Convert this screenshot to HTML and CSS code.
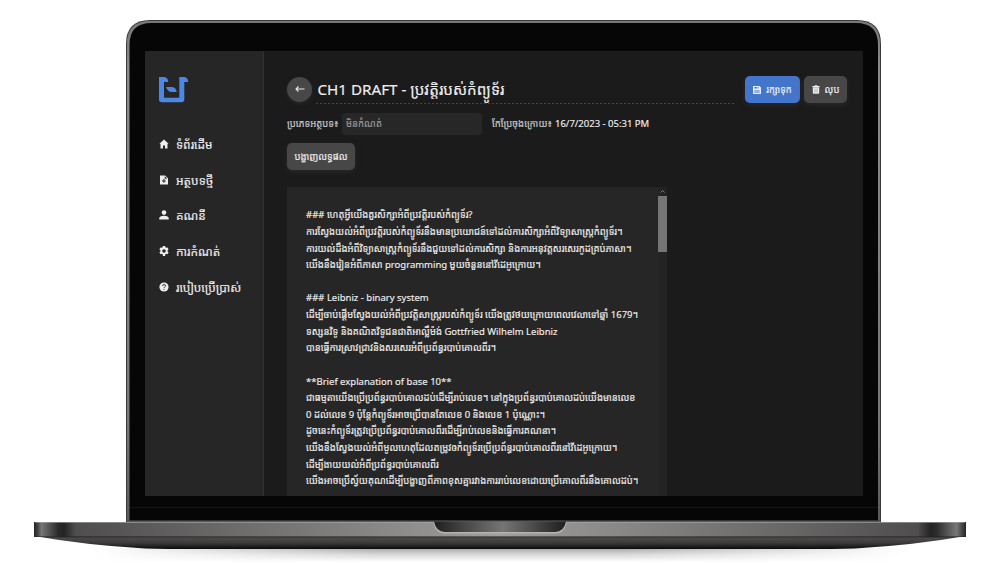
FILE: index.html
```html
<!DOCTYPE html>
<html lang="km">
<head>
<meta charset="utf-8">
<title>CH1 DRAFT</title>
<link rel="stylesheet" href="styles.css">
</head>
<body>
<div class="stage">
<svg class="laptop" width="1000" height="563" viewBox="0 0 1000 563" aria-hidden="true">
  <defs>
    <linearGradient id="deck" x1="34" x2="966" y1="0" y2="0" gradientUnits="userSpaceOnUse">
      <stop offset="0" stop-color="#222"/><stop offset=".004" stop-color="#444"/><stop offset=".008" stop-color="#777"/>
      <stop offset=".026" stop-color="#2b2b2b"/><stop offset=".032" stop-color="#242424"/><stop offset=".045" stop-color="#504e4f"/>
      <stop offset=".09" stop-color="#565454"/><stop offset=".5" stop-color="#a09f9d"/><stop offset=".91" stop-color="#565454"/>
      <stop offset=".948" stop-color="#504e4f"/><stop offset=".962" stop-color="#242424"/><stop offset=".968" stop-color="#2b2b2b"/>
      <stop offset=".99" stop-color="#777"/><stop offset="1" stop-color="#222"/>
    </linearGradient>
    <linearGradient id="under" x1="0" x2="0" y1="536" y2="549" gradientUnits="userSpaceOnUse">
      <stop offset="0" stop-color="#2c2a29"/><stop offset=".2" stop-color="#4b4948"/><stop offset=".55" stop-color="#3b3938"/><stop offset="1" stop-color="#0a0a0a"/>
    </linearGradient>
    <linearGradient id="notch" x1="434" x2="566" y1="0" y2="0" gradientUnits="userSpaceOnUse">
      <stop offset="0" stop-color="#1e1e1e"/><stop offset=".15" stop-color="#3a3939"/><stop offset=".52" stop-color="#777574"/><stop offset=".85" stop-color="#3a3939"/><stop offset="1" stop-color="#1e1e1e"/>
    </linearGradient>
    <linearGradient id="rim" x1="0" x2="0" y1="20" y2="522" gradientUnits="userSpaceOnUse">
      <stop offset="0" stop-color="#777"/><stop offset=".1" stop-color="#8b8b8b"/><stop offset=".8" stop-color="#777"/><stop offset="1" stop-color="#5a5a5a"/>
    </linearGradient>
    <linearGradient id="shadow" x1="0" x2="0" y1="548" y2="562" gradientUnits="userSpaceOnUse">
      <stop offset="0" stop-color="#a4a4a4"/><stop offset=".45" stop-color="#d6d6d6"/><stop offset="1" stop-color="#fff"/>
    </linearGradient>
    <linearGradient id="fade" x1="0" x2="1" y1="0" y2="0">
      <stop offset="0" stop-color="#000"/><stop offset=".35" stop-color="#fff"/><stop offset=".65" stop-color="#fff"/><stop offset="1" stop-color="#000"/>
    </linearGradient>
    <mask id="sides"><rect x="95" y="548" width="810" height="15" fill="url(#fade)"/></mask>
  </defs>
  <rect x="95" y="548" width="810" height="14" fill="url(#shadow)" mask="url(#sides)"/>
  <path d="M126 522V44q0-24 24-24H857q24 0 24 24V522Z" fill="#3b3b3b"/>
  <path d="M127 522V44q0-23 23-23H857q23 0 23 23V522Z" fill="url(#rim)"/>
  <path d="M129.500 521V45q0-22 22-22H856q22 0 22 22V521Z" fill="#060606"/>
  <path d="M130 507.500H878" stroke="#141414"/>
  <path d="M129 520.500H879" stroke="#343434"/>
  <path d="M34 536H966Q915 545 855 548.500Q835 549 800 549H200Q165 549 145 548.500Q85 545 34 536Z" fill="url(#under)"/>
  <rect x="34" y="522" width="932" height="15" fill="url(#deck)"/>
  <path d="M35 522.500H965" stroke="#aaa" stroke-opacity=".6"/>
  <path d="M36 536.500H964" stroke="#222" stroke-opacity=".55"/>
  <path d="M433.500 522Q435 533.500 445 533.500H555Q565 533.500 566.500 522Z" fill="#b5b3b1"/>
  <path d="M434 521.500Q436 532 445 532H555Q564 532 566 521.500Z" fill="url(#notch)"/>
</svg>

<div class="screen">
  <nav class="sidebar">
    <svg class="logo" width="32" height="28" viewBox="0 0 32 28" fill="#4b87e4"><path d="M1 1H5.500Q10 1 10.300 6H6V21.700H21.300V1H25.500Q30 1 30.300 6H26.300V23.500Q26.300 26.300 23.500 26.300H3.800Q1 26.300 1 23.500Z"/><path d="M8 11H13.500Q18 11 18.700 16H14Q9.500 16 8 11Z"/></svg>
    <a class="item"><svg viewBox="0 0 10 10"><path d="M5 .5.4 4.800h1.100V9.500H4V6.500h2v3h2.500V4.800h1.100Z"/></svg><span>ទំព័រដើម</span></a>
    <a class="item"><svg viewBox="0 0 10 10"><path fill-rule="evenodd" d="M1 .5h5L9 3.300v6.200H1ZM5.700 1.300v2.400h2.500ZM4.400 4v1.400H3v1h1.400v1.400h1V6.400h1.400v-1H5.400V4Z"/></svg><span>អត្ថបទថ្មី</span></a>
    <a class="item"><svg viewBox="0 0 10 10"><circle cx="5" cy="2.600" r="2.300"/><path d="M.3 9.500V8.300q0-2.600 4.700-2.600t4.700 2.600v1.200Z"/></svg><span>គណនី</span></a>
    <a class="item"><svg viewBox="0 0 10 10"><path fill-rule="evenodd" d="M3.900 0h2.200l.3 1.300.8.500 1.300-.4 1.100 1.900-1 .9v1.200l1 .9-1.100 1.900-1.300-.4-.8.500L6.100 10H3.900l-.3-1.700-.8-.5-1.300.4L.4 6.300l1-.9V4.200l-1-.9 1.100-1.900 1.300.4.8-.5ZM5 3.200a1.800 1.800 0 1 0 0 3.600 1.800 1.800 0 1 0 0-3.600Z"/></svg><span>ការកំណត់</span></a>
    <a class="item"><svg viewBox="0 0 10 10"><circle cx="5" cy="5" r="4.600"/><path d="M3.600 4q0-1.500 1.500-1.500T6.500 3.900q0 .7-.9 1.200-.6.300-.6.900M5 6.800v1" fill="none" stroke="#262626" stroke-width=".9"/></svg><span>របៀបប្រើប្រាស់</span></a>
  </nav>
  <main class="main">
    <header class="head">
      <div class="back"><svg width="10" height="8" viewBox="0 0 10 8"><path d="M9.500 4H1M3.500 1.500 1 4l2.500 2.500" fill="none" stroke="#e8e8e8" stroke-width="1.100"/></svg></div>
      <div class="title"><span>CH1 DRAFT - ប្រវត្តិរបស់កំព្យូទ័រ</span></div>
      <div class="btn save"><svg width="8" height="8" viewBox="0 0 8 8"><path fill-rule="evenodd" d="M0 0h6.500L8 1.500V8H0ZM1.500 1v1.600h4V1ZM1.500 4.200V7h5V4.200Z" fill="#e6edf9"/><path d="M1.500 5.100h5M1.500 6.200h5M4.300 0v3" stroke="#e6edf9" stroke-width=".7"/></svg><span>រក្សាទុក</span></div>
      <div class="btn del"><svg width="8" height="9" viewBox="0 0 8 9"><path d="M.3 1h2.200l.4-.8h2.200l.4.800h2.200v1.100H.3ZM.8 2.300h6.400v5.500q0 1-1 1H1.800q-1 0-1-1Z" fill="#eee"/><path d="M2.600 3.500v4.300M4 3.500v4.300M5.400 3.500v4.300" stroke="#999" stroke-width=".5"/></svg><span>លុប</span></div>
    </header>
    <div class="meta">
      <span class="label">ប្រភេទអត្ថបទ៖</span>
      <div class="field"><span>មិនកំណត់</span></div>
      <span class="edited">កែប្រែចុងក្រោយ៖</span><span class="date">16/7/2023 - 05:31 PM</span>
    </div>
    <div class="btn show"><span>បង្ហាញលទ្ធផល</span></div>
    <div class="editor">
      <div class="text">
        <p><span>### ហេតុអ្វីយើងគួរសិក្សាអំពីប្រវត្តិរបស់កំព្យូទ័រ?</span></p>
        <p><span>ការស្វែងយល់អំពីប្រវត្តិរបស់កំព្យូទ័រនឹងមានប្រយោជន៍ទៅដល់ការសិក្សាអំពីវិទ្យាសាស្ត្រកំព្យូទ័រ។</span></p>
        <p><span>ការយល់ដឹងអំពីវិទ្យាសាស្ត្រកំព្យូទ័រនឹងជួយទៅដល់ការសិក្សា និងការអនុវត្តសរសេរកូដគ្រប់ភាសា។</span></p>
        <p><span>យើងនឹងរៀនអំពីភាសា programming មួយចំនួននៅវីដេអូក្រោយ។</span></p>
        <p></p>
        <p><span>### Leibniz - binary system</span></p>
        <p><span>ដើម្បីចាប់ផ្តើមស្វែងយល់អំពីប្រវត្តិសាស្ត្ររបស់កំព្យូទ័រ យើងត្រូវថយក្រោយពេលវេលាទៅឆ្នាំ 1679។</span></p>
        <p><span>ទស្សនវិទូ និងគណិតវិទូជនជាតិអាល្លឺម៉ង់ Gottfried Wilhelm Leibniz</span></p>
        <p><span>បានធ្វើការស្រាវជ្រាវនិងសរសេរអំពីប្រព័ន្ធរបាប់គោលពីរ។</span></p>
        <p></p>
        <p><span>**Brief explanation of base 10**</span></p>
        <p><span>ជាធម្មតាយើងប្រើប្រព័ន្ធរបាប់គោលដប់ដើម្បីរាប់លេខ។ នៅក្នុងប្រព័ន្ធរបាប់គោលដប់យើងមានលេខ</span></p>
        <p><span>0 ដល់លេខ 9 ប៉ុន្តែកំព្យូទ័រអាចប្រើបានតែលេខ 0 និងលេខ 1 ប៉ុណ្ណោះ។</span></p>
        <p><span>ដូចនេះកំព្យូទ័រត្រូវប្រើប្រព័ន្ធរបាប់គោលពីរដើម្បីរាប់លេខនិងធ្វើការគណនា។</span></p>
        <p><span>យើងនឹងស្វែងយល់អំពីមូលហេតុដែលតម្រូវឲកំព្យូទ័រប្រើប្រព័ន្ធរបាប់គោលពីរនៅវីដេអូក្រោយ។</span></p>
        <p><span>ដើម្បីងាយយល់អំពីប្រព័ន្ធរបាប់គោលពីរ</span></p>
        <p><span>យើងអាចប្រើស្វ័យគុណដើម្បីបង្ហាញពីភាពខុសគ្នារវាងការរាប់លេខដោយប្រើគោលពីរនឹងគោលដប់។</span></p>
      </div>
      <div class="scroll"><svg width="9" height="9" viewBox="0 0 9 9"><path d="M2.500 5.500 4.500 3.500l2 2" fill="none" stroke="#888" stroke-width=".9"/></svg><div class="thumb"></div></div>
    </div>
  </main>
</div>
</div>
</body>
</html>
```
FILE: styles.css
```css
* { box-sizing: border-box; }
body { margin: 0; background: #fff; font-family: "Noto Sans", "Noto Sans Khmer", sans-serif; color: #eee; -webkit-text-stroke: .15px; }
.stage { position: relative; width: 1000px; height: 563px; overflow: hidden; padding: 51px 137px 0 145px; }
.laptop { position: absolute; left: 0; top: 0; }
.screen { position: relative; display: flex; width: 718px; height: 445px; background: #1b1b1b; overflow: hidden; white-space: nowrap; }
.sidebar { width: 119px; flex: none; background: #262626; border-right: 1px solid #303030; padding: 25px 0 0 13px; }
.logo { display: block; margin-bottom: 22px; }
.item { display: flex; align-items: center; height: 35.800px; gap: 7px; padding-left: 1px; font-size: 11.900px; }
.item svg { width: 10px; height: 10px; flex: none; fill: #eee; }
.main { flex: 1; min-width: 0; padding: 25px 16px 0 23px; }
.head { display: flex; height: 27px; align-items: center; }
.back { width: 25px; height: 25px; border-radius: 50%; background: #474747; display: flex; align-items: center; justify-content: center; box-shadow: 0 2px 4px #282828; margin-bottom: 1px; }
.title { flex: 1; margin: 0 9px 0 4px; height: 28px; line-height: 26px; font-size: 15.200px; padding-left: 1.500px; background: repeating-linear-gradient(90deg, #434343 0 2.500px, transparent 2.500px 4px) 0 100% / 100% 1px no-repeat; }
.btn { display: flex; align-items: center; justify-content: center; height: 27px; border-radius: 5px; background: #474747; font-size: 9.500px; gap: 5px; box-shadow: 0 2px 5px #292929; }
.save { width: 55px; background: #4376ca; margin-right: 4px; font-size: 9.300px; }
.del { width: 43px; }
.meta { display: flex; height: 22px; margin-top: 10px; align-items: center; font-size: 9.500px; line-height: 20px; }
.label, .edited { color: #ccc; padding-bottom: 1px; }
.date { padding-bottom: 1px; }
.label { width: 55px; }
.field { width: 140px; height: 22px; line-height: 21px; background: #272727; border-radius: 3px; padding-left: 4px; color: #999; margin-right: 10px; }
.edited { width: 63px; }
.show { width: 68px; margin-top: 8px; }
.editor { display: flex; width: 380px; height: 310px; margin-top: 17px; background: #262626; }
.text { flex: 1; padding: 20.300px 0 0 19px; font-size: 9.500px; }
.text p { margin: 0; height: 16.630px; line-height: 16.630px; }
.scroll { width: 9px; background: #232323; }
.scroll svg { display: block; }
.thumb { height: 56px; background: #757575; }
```
